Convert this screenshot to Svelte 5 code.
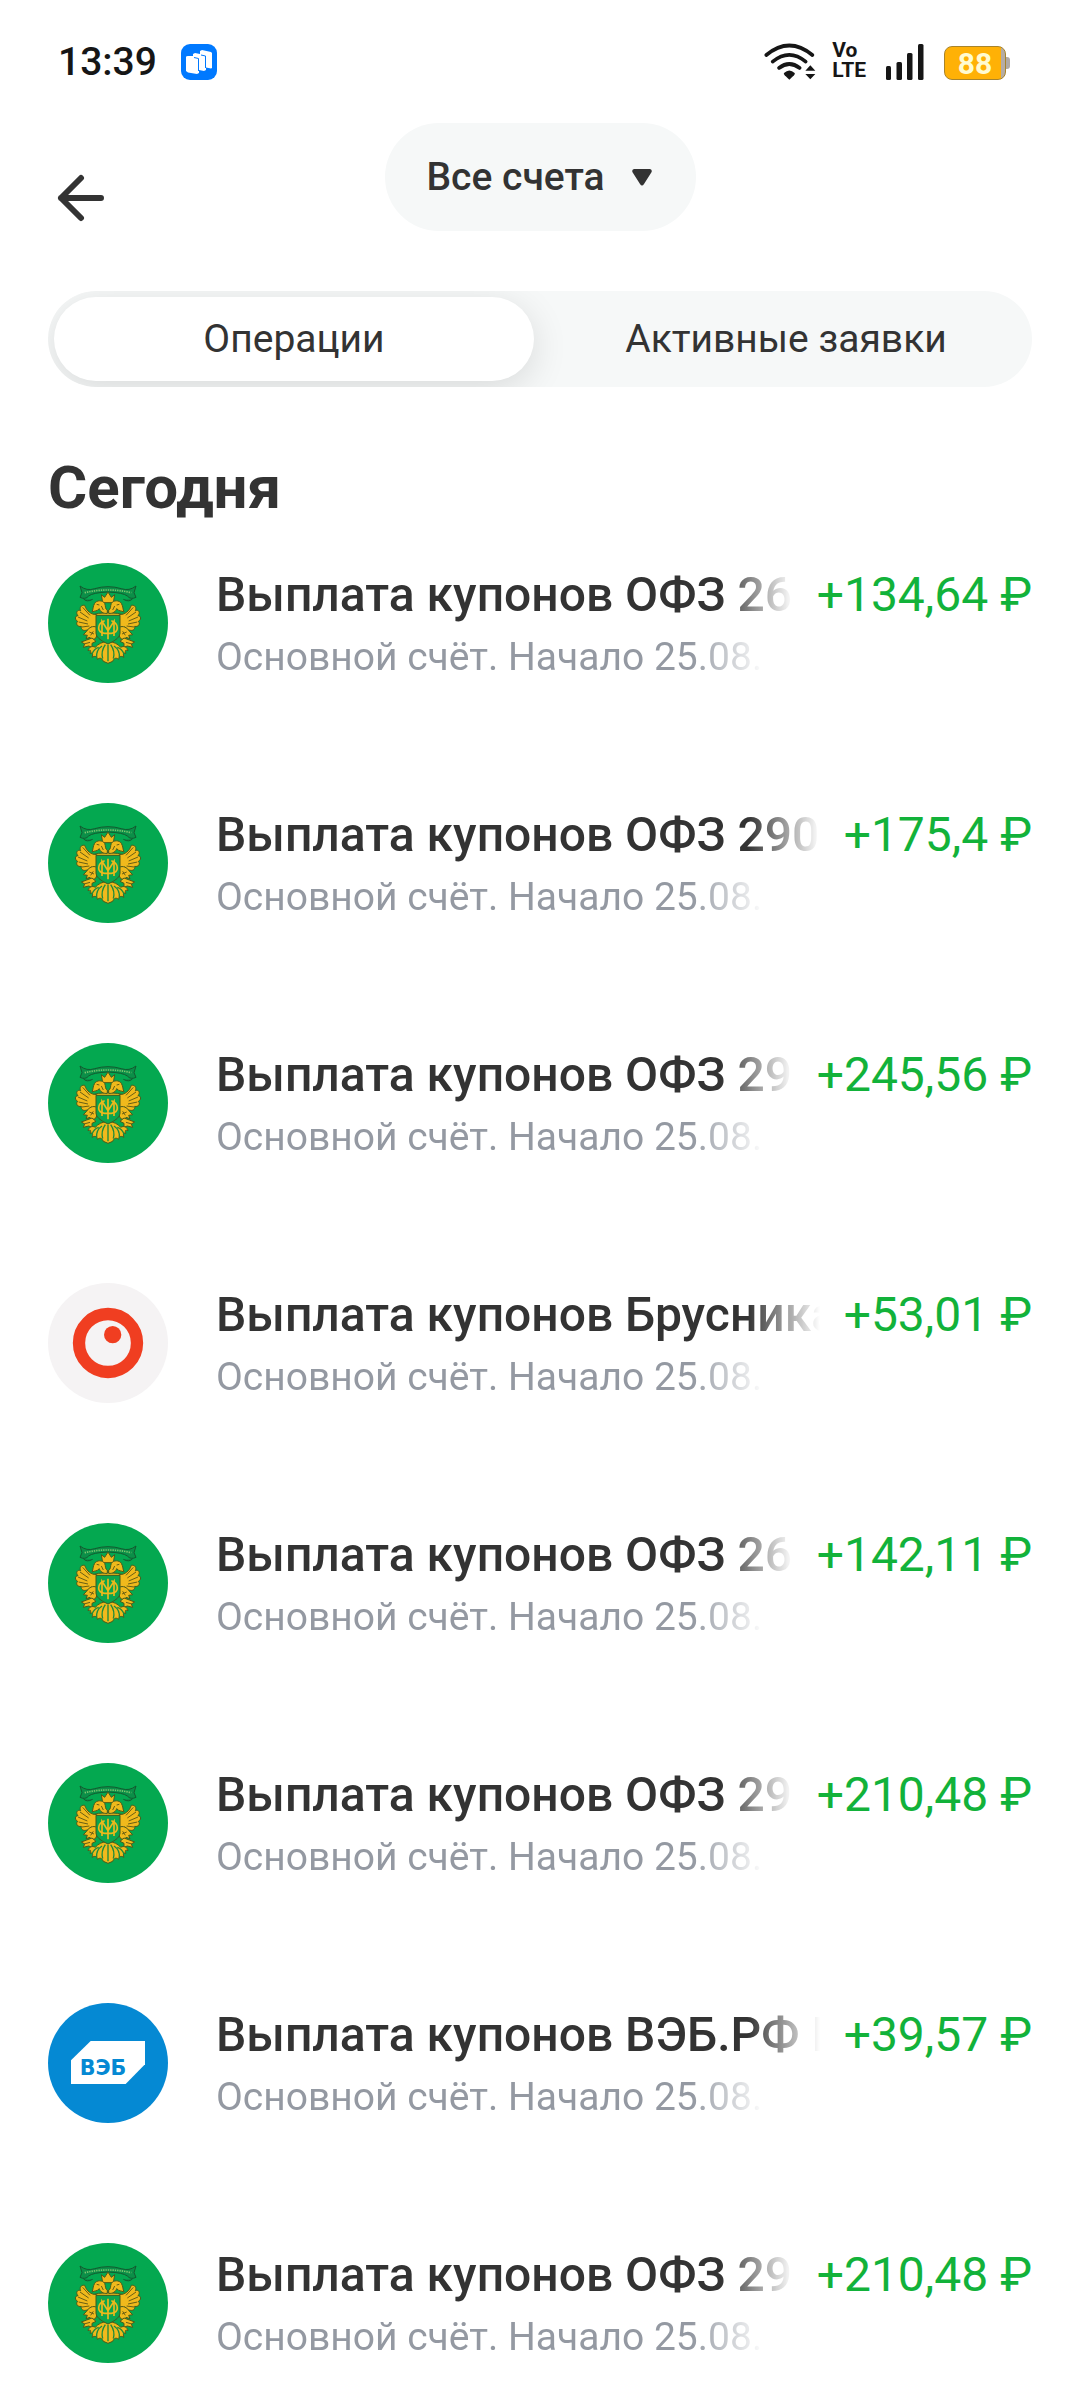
<script>
  const tabs = ['Операции', 'Активные заявки'];
  let active = $state(0);

  const operations = [
    { title: 'Выплата купонов ОФЗ 26', amount: '+134,64 ₽', logo: 'ofz' },
    { title: 'Выплата купонов ОФЗ 290', amount: '+175,4 ₽', logo: 'ofz' },
    { title: 'Выплата купонов ОФЗ 29', amount: '+245,56 ₽', logo: 'ofz' },
    { title: 'Выплата купонов Брусника', amount: '+53,01 ₽', logo: 'brusnika' },
    { title: 'Выплата купонов ОФЗ 26', amount: '+142,11 ₽', logo: 'ofz' },
    { title: 'Выплата купонов ОФЗ 29', amount: '+210,48 ₽', logo: 'ofz' },
    { title: 'Выплата купонов ВЭБ.РФ П', amount: '+39,57 ₽', logo: 'veb' },
    { title: 'Выплата купонов ОФЗ 29', amount: '+210,48 ₽', logo: 'ofz' }
  ];
</script>

{#snippet wing()}
  <path class="feather" d="M170 194 C154 194 140 184 134 166 C122 164 118 174 122 182 C112 178 106 188 114 197 C104 197 104 210 113 214 C106 220 112 232 124 229 C122 238 130 244 140 240 C144 246 152 244 156 238 L170 232 Z" />
  <path class="dark" d="M120 186 L146 204 M114 201 L142 213 M116 216 L144 222 M126 231 L148 228 M142 240 L156 230 M128 172 L150 196" />
  <path class="feather" d="M202 190 C190 192 180 184 178 176 C172 184 164 182 156 186 C160 178 158 170 164 160 C170 150 188 150 194 160 C198 170 194 176 202 180 Z" />
  <path class="dark" d="M170 163 L178 165 M184 168 L190 180" />
  <path class="feather" d="M170 232 C160 226 146 232 140 244 L130 254 L142 256 L138 266 L150 262 L154 270 L166 266 L174 250 Z" />
  <path class="dark" d="M148 246 L162 252 M152 256 L160 244" />
  <path class="feather" d="M156 264 L140 270 L124 276 L134 282 L130 292 L146 288 L156 292 L156 280 L168 274 Z" />
  <path class="dark" d="M132 282 L150 277" />
{/snippet}

<div class="screen">
  <div class="status">
    <div class="clock">
      <time>13:39</time>
      <svg width="36" height="36" viewBox="0 0 36 36">
        <rect width="36" height="36" rx="9" fill="#0079ff" />
        <path fill="#fff" d="M5 13 Q5 12 7 12 H12 V10 L14 9 L19 10 V7 L21 6 L30 8 L31 9 V24 L30 24.500 L25 23.500 V26 L23 27 L18 26 V29 L16 30 L7 28.500 L5 27 Z" />
        <path fill="none" stroke="#0079ff" stroke-width="1" d="M13 13.500 L17.500 14.500 V27 M20 11 L24.500 12 V24" />
      </svg>
    </div>
    <div class="indicators">
      <svg width="52" height="38" viewBox="68 36 156 114">
        <g fill="none" stroke="#161616" stroke-width="11" stroke-linecap="round">
          <path d="M75 75 Q144 18 213 75" />
          <path d="M94 95 Q144 54 193 95" />
          <path d="M113 114 Q144 90 175 114" />
        </g>
        <path fill="#161616" d="M128 129 Q144 114 160 129 Q162 132 158 136 L144 149 L130 136 Q126 132 128 129 Z" />
        <path fill="#161616" d="M192 122 L207 106 L222 122 Z M192 132 L207 148 L222 132 Z" />
      </svg>
      <div class="volte"><span>Vo</span><span>LTE</span></div>
      <svg width="46" height="36" viewBox="0 0 46 36">
        <g fill="#161616">
          <rect x="4" y="22" width="5" height="14" rx="1.5" />
          <rect x="14.5" y="18" width="5.5" height="18" rx="1.5" />
          <rect x="25" y="9" width="5.5" height="27" rx="1.5" />
          <rect x="36" y="0" width="5.5" height="36" rx="1.5" />
        </g>
      </svg>
      <div class="battery">88</div>
    </div>
  </div>

  <header>
    <button class="back" aria-label="Назад">
      <svg width="48" height="48" viewBox="0 0 48 48" fill="none" stroke="#333" stroke-width="6" stroke-linecap="round" stroke-linejoin="round">
        <path d="M24 4 L4 24 L24 44 M4 24 H44" />
      </svg>
    </button>
    <label class="account">
      <select aria-label="Счёт">
        <option>Все счета</option>
      </select>
      <svg width="20" height="17" viewBox="0 0 20 17">
        <path d="M2 0 H18 Q21 1 19 4 L12 15 Q10 18 8 15 L1 4 Q-1 1 2 0 Z" fill="#333" />
      </svg>
    </label>
  </header>

  <main>
    <div class="tabs" role="tablist">
      {#each tabs as tab, i}
        <button role="tab" class:active={active === i} aria-selected={active === i} onclick={() => (active = i)}>{tab}</button>
      {/each}
    </div>

    <h2>Сегодня</h2>

    <ul>
      {#each operations as op}
        <li>
          {#if op.logo === 'ofz'}
            <svg class="logo" viewBox="24 39 360 360">
              <circle cx="204" cy="219" r="180" fill="#04a850" />
              <path class="ribbon" d="M120 108 Q140 124 164 116 Q204 104 244 116 Q268 124 288 108 L282 128 L288 142 Q272 150 262 138 Q250 128 204 126 Q158 128 146 138 Q136 150 120 142 L126 128 Z" />
              <path d="M134 128 Q204 112 274 128" fill="none" stroke="#7cc56e" stroke-width="5" stroke-dasharray="4 3" />
              <path class="ribbon" d="M130 146 Q140 158 158 148 M278 146 Q268 158 250 148" />
              <path class="feather" d="M188 158 L184 134 L194 142 L204 126 L214 142 L224 134 L220 158 Z" />
              <path class="feather" d="M148 196 Q204 180 260 196 L248 214 H160 Z" />
              {@render wing()}
              <g transform="matrix(-1 0 0 1 408 0)">{@render wing()}</g>
              <path class="feather" d="M204 274 C186 276 174 282 166 292 C156 286 146 292 144 302 C152 298 154 302 150 310 C158 306 160 314 156 322 C166 316 172 320 172 328 C180 322 186 324 190 334 L204 340 L218 334 C222 324 228 322 236 328 C236 320 242 316 252 322 C248 314 250 306 258 310 C254 302 256 298 264 302 C262 292 252 286 242 292 C234 282 222 276 204 274 Z" />
              <path d="M204 284 V334 M196 284 Q182 304 188 326 M212 284 Q226 304 220 326 M186 288 Q168 300 170 322 M222 288 Q240 300 238 322 M176 292 Q162 296 156 312 M232 292 Q246 296 252 312" fill="none" stroke="#1c8b3c" stroke-width="4" />
              <path d="M168 196 H240 V250 Q240 266 204 282 Q168 266 168 250 Z" fill="#0ba54e" stroke="#3f5a1d" stroke-width="3" />
              <g fill="none" stroke="#efb91b" stroke-width="5">
                <path d="M204 206 V268 M186 258 V214 L204 242 L222 214 V258" />
                <path d="M194 212 Q176 218 176 234 Q176 248 194 250 H214 Q232 248 232 234 Q232 218 214 212" />
              </g>
            </svg>
          {:else if op.logo === 'brusnika'}
            <svg class="logo" viewBox="24 39 360 360">
              <circle cx="204" cy="219" r="180" fill="#f5f3f4" />
              <circle cx="204" cy="219" r="87" fill="none" stroke="#f03e21" stroke-width="37" />
              <circle cx="218" cy="194" r="26" fill="#f03e21" />
            </svg>
          {:else}
            <svg class="logo" viewBox="24 39 360 360">
              <circle cx="204" cy="219" r="180" fill="#0589d3" />
              <path d="M152 153 H315 V223 L257 282 H93 V211 Z" fill="#fff" />
              <text x="189" y="256" text-anchor="middle">ВЭБ</text>
            </svg>
          {/if}
          <div class="details">
            <div class="line">
              <span class="title">{op.title}</span>
              <span class="amount">{op.amount}</span>
            </div>
            <p>Основной счёт. Начало 25.08.</p>
          </div>
        </li>
      {/each}
    </ul>
  </main>
</div>

<style>
  :global(body) {
    background: #fff;
  }
  .screen {
    font-family: Roboto, "Noto Sans", sans-serif;
    color: #333;
  }
  .screen svg {
    display: block;
    flex: none;
  }
  button, select {
    font: inherit;
    color: inherit;
    border: none;
    background: none;
    padding: 0;
    cursor: pointer;
  }

  .status {
    display: flex;
    justify-content: space-between;
    align-items: flex-end;
    height: 80px;
    padding: 0 70px 0 58px;
    box-sizing: border-box;
    color: #161616;
  }
  .clock {
    display: flex;
    align-items: center;
    gap: 24px;
  }
  .clock time {
    font-size: 39px;
    line-height: 36px;
    font-weight: 500;
  }
  .indicators {
    display: flex;
    align-items: flex-end;
    gap: 16px;
  }
  .volte {
    display: flex;
    flex-direction: column;
    font-size: 21px;
    line-height: 20px;
    font-weight: 700;
  }
  .battery {
    position: relative;
    width: 62px;
    margin-right: 4px;
    box-sizing: border-box;
    height: 34px;
    border: 1px solid #a8842c;
    border-radius: 8px;
    background: linear-gradient(to right, #ffb106 94%, #b5aca4 94%);
    color: #fffbd2;
    font-size: 30px;
    line-height: 33px;
    font-weight: 700;
    text-align: center;
  }
  .battery::after {
    content: "";
    position: absolute;
    right: -5px;
    top: 10px;
    width: 4px;
    height: 12px;
    border-radius: 0 3px 3px 0;
    background: #b0aaa5;
  }

  header {
    display: grid;
    grid-template-columns: 1fr auto 1fr;
    padding: 43px 48px 0;
  }
  .back {
    align-self: end;
    justify-self: start;
    height: 66px;
    padding: 0 9px;
  }
  .account {
    display: flex;
    align-items: center;
    gap: 26px;
    height: 108px;
    padding: 0 44px 0 42px;
    box-sizing: border-box;
    border-radius: 54px;
    background: #f6f8f8;
  }
  .account select {
    appearance: none;
    font-size: 39px;
    line-height: 46px;
    font-weight: 500;
  }

  main {
    padding: 60px 48px 36px;
  }
  .tabs {
    display: flex;
    gap: 12px;
    padding: 6px;
    border-radius: 48px;
    background: #f6f8f8;
    overflow: hidden;
  }
  .tabs button {
    flex: 1;
    height: 84px;
    border-radius: 42px;
    font-size: 39px;
    line-height: 46px;
  }
  .tabs .active {
    background: #fff;
    box-shadow: 0 8px 36px rgba(0, 0, 0, 0.12);
  }

  h2 {
    margin: 65px 0 39px;
    font-size: 60px;
    line-height: 72px;
    font-weight: 700;
  }

  ul {
    display: flex;
    flex-direction: column;
    gap: 120px;
    margin: 0;
    padding: 0;
    list-style: none;
  }
  li {
    display: flex;
    gap: 48px;
  }
  .logo {
    width: 120px;
    height: 120px;
  }
  .logo text {
    font: 700 62px "DejaVu Sans", sans-serif;
    fill: #0589d3;
  }
  .feather {
    fill: #f0b91c;
    stroke: #4b5a1a;
    stroke-width: 3;
  }
  .dark {
    fill: none;
    stroke: #6a5f14;
    stroke-width: 3;
  }
  .ribbon {
    fill: #0b8f48;
    stroke: #14592f;
    stroke-width: 3;
  }

  .details {
    flex: 1;
    min-width: 0;
    padding-top: 4px;
  }
  .line {
    display: flex;
    gap: 24px;
    font-size: 48px;
    line-height: 56px;
    white-space: nowrap;
  }
  .title {
    flex: 1;
    min-width: 0;
    overflow: hidden;
    font-weight: 500;
  }
  .amount {
    color: #12b23a;
  }
  p {
    width: calc(100% - 268px);
    margin: 11px 0 0;
    overflow: hidden;
    font-size: 39px;
    line-height: 46px;
    white-space: nowrap;
    color: #9499a2;
  }
  /* long names fade out at the right edge */
  .title, p {
    mask-image: linear-gradient(to left, transparent, #000 72px);
  }
</style>
